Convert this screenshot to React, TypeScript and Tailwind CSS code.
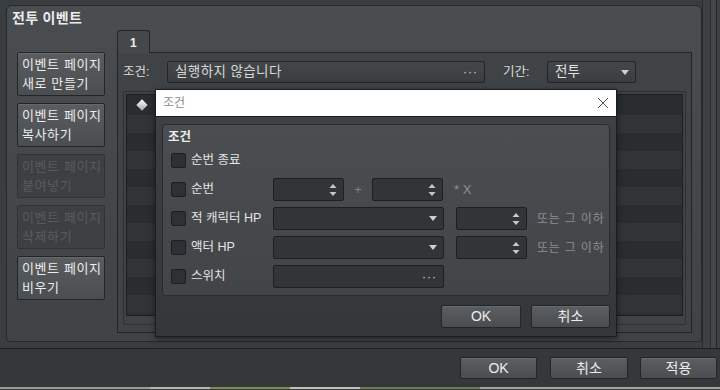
import React from 'react';

const Caret = () => (
  <svg width="8" height="5" viewBox="0 0 8 5">
    <path d="M0 0h8L4 5z" fill="#d0d0d0" />
  </svg>
);

const Spin = () => (
  <svg width="8" height="14" viewBox="0 0 8 14">
    <path d="M4 1L7.5 5H0.5z" fill="#c8c8c8" />
    <path d="M0.5 9H7.5L4 13z" fill="#c8c8c8" />
  </svg>
);

const Dots = () => <span className="text-[12px] leading-none tracking-[1px] text-[#d0d0d0]">···</span>;

// big grey button used in the left column and footers
const Btn = ({ children, className = '' }: { children: React.ReactNode; className?: string }) => (
  <div
    className={`flex items-center justify-center rounded-[2px] border border-[#232527] bg-gradient-to-b from-[#5c5f62] to-[#4a4d50] text-[14px] text-[#ececec] shadow-[inset_0_1px_0_rgba(255,255,255,0.08)] ${className}`}
  >
    {children}
  </div>
);

const PageBtn = ({ lines, disabled }: { lines: string[]; disabled?: boolean }) => (
  <div
    className={`flex h-[44px] w-[88px] flex-col justify-center rounded-[2px] border pl-[4px] text-[13px] leading-[19px] tracking-[0.6px] ${
      disabled
        ? 'border-[#303234] bg-[#3d4043] text-[#585b5e]'
        : 'border-[#232527] bg-gradient-to-b from-[#5a5d60] to-[#4b4e51] text-[#ececec] shadow-[inset_0_1px_0_rgba(255,255,255,0.08)]'
    }`}
  >
    {lines.map(l => (
      <span key={l}>{l}</span>
    ))}
  </div>
);

const Check = () => <div className="h-[15px] w-[15px] shrink-0 rounded-[2px] border border-[#1c1e20] bg-[#2e3134]" />;

const Field = ({ w, children }: { w: string; children?: React.ReactNode }) => (
  <div className={`flex h-[23px] items-center justify-end rounded-[2px] border border-[#1d1f21] bg-[#323538] pr-[6px] ${w}`}>
    {children}
  </div>
);

const Row = ({ label, children }: { label: string; children?: React.ReactNode }) => (
  <div className="flex h-[29px] items-center pl-[8px]">
    <div className="flex w-[102px] items-center gap-[5px]">
      <Check />
      <span className="text-[12.5px] text-[#e4e4e4]">{label}</span>
    </div>
    {children}
  </div>
);

const stripes = Array.from({ length: 12 }, (_, i) => i);

export default function App() {
  return (
    <div className="relative flex h-[390px] w-[720px] flex-col overflow-hidden bg-[#3a3d40] font-['Liberation_Sans','Noto_Sans_CJK_KR',sans-serif] text-[#e6e6e6]">
      {/* top area */}
      <div className="flex h-[349px] border-b border-[#1f2123]">
        <div className="w-[702px] pl-[6px] pt-[5px]">
          <div className="flex h-[337px] w-[696px] flex-col rounded-t-[6px] rounded-b-[4px] border border-[#26282a] bg-gradient-to-b from-[#4a4d50] to-[#404346]">
            <div className="h-[24px] pl-[5px] pt-[3px] text-[14px] font-bold leading-[18px] tracking-[0.3px] text-[#ececec]">전투 이벤트</div>
            <div className="flex flex-1">
              {/* left buttons */}
              <div className="flex w-[110px] flex-col gap-[7px] pl-[10px] pt-[22px]">
                <PageBtn lines={['이벤트 페이지', '새로 만들기']} />
                <PageBtn lines={['이벤트 페이지', '복사하기']} />
                <PageBtn lines={['이벤트 페이지', '붙여넣기']} disabled />
                <PageBtn lines={['이벤트 페이지', '삭제하기']} disabled />
                <PageBtn lines={['이벤트 페이지', '비우기']} />
              </div>
              {/* tab + content */}
              <div className="flex flex-col">
                <div className="relative z-10 -mb-px flex h-[23px] w-[33px] items-start rounded-t-[3px] border border-b-0 border-[#222426] bg-[#45484b] pl-[12px] pt-[3px] text-[12px] font-bold text-[#ececec]">
                  1
                </div>
                <div className="h-[281px] w-[575px] border border-[#222426] bg-[#404346] px-[5px] pt-[8px]">
                  <div className="flex h-[22px] items-center">
                    <span className="w-[44px] text-[12.5px] text-[#dcdcdc]">조건:</span>
                    <div className="flex h-[22px] w-[318px] items-center justify-between rounded-[2px] border border-[#222426] bg-gradient-to-b from-[#44474a] to-[#3b3e41] pl-[7px] pr-[6px]">
                      <span className="text-[13.5px] tracking-[0.4px] text-[#d8d8d8]">실행하지 않습니다</span>
                      <Dots />
                    </div>
                    <span className="ml-[18px] w-[44px] text-[12.5px] text-[#dcdcdc]">기간:</span>
                    <div className="flex h-[22px] w-[89px] items-center justify-between rounded-[2px] border border-[#222426] bg-gradient-to-b from-[#44474a] to-[#3b3e41] pl-[7px] pr-[6px]">
                      <span className="text-[13.5px] text-[#e0e0e0]">전투</span>
                      <Caret />
                    </div>
                  </div>
                  <div className="mt-[8px] h-[234px] w-[563px] rounded-[2px] border border-[#2e3133] p-[2px]">
                    <div className="h-[222px] w-[557px] overflow-hidden border border-[#1c1e20] bg-[#2c2f31]">
                      {stripes.map(i => (
                        <div key={i} className={`flex h-[18px] items-center ${i % 2 === 0 ? 'bg-[#2a2d2f]' : 'bg-[#313436]'} ${i === 0 ? 'h-[20px]' : ''}`}>
                          {i === 0 && (
                            <div className="ml-[11px] h-[8px] w-[8px] rotate-45 bg-gradient-to-br from-white to-[#a8a8a8]" />
                          )}
                        </div>
                      ))}
                    </div>
                  </div>
                </div>
              </div>
            </div>
          </div>
        </div>
        {/* right edge strip */}
        <div className="flex flex-1 border-l border-[#27292b] bg-[#3e4144]">
          <div className="w-[7px]" />
          <div className="w-px bg-[#2a2c2e]" />
          <div className="w-[5px] bg-[#44474a]" />
          <div className="w-px bg-[#242628]" />
        </div>
      </div>

      {/* footer */}
      <div className="flex h-[38px] items-center justify-end bg-[#35383b] pr-[3px]">
        <Btn className="h-[22px] w-[77px]">OK</Btn>
        <Btn className="ml-[13px] h-[22px] w-[78px]">취소</Btn>
        <Btn className="ml-[12px] h-[22px] w-[77px]">적용</Btn>
      </div>
      <div className="flex h-[2px]">
        <div className="w-[150px] bg-[#9a9a96]" />
        <div className="w-[60px] bg-[#b6b6b0]" />
        <div className="w-[80px] bg-[#7a8a50]" />
        <div className="w-[70px] bg-[#c0c0ba]" />
        <div className="w-[120px] bg-[#6d7a4c]" />
        <div className="flex-1 bg-[#a4a49e]" />
      </div>

      {/* condition dialog */}
      <div className="absolute left-[155px] top-[89px] flex h-[248px] w-[462px] flex-col border border-[#1a1c1e] bg-gradient-to-b from-[#3f4245] to-[#34373a] shadow-[0_2px_6px_rgba(0,0,0,0.5)]">
        <div className="flex h-[27px] items-center justify-between border-b border-[#1a1c1e] bg-white pl-[7px] pr-[7px]">
          <span className="text-[12px] text-[#8a8a8a]">조건</span>
          <svg width="12" height="12" viewBox="0 0 12 12">
            <path d="M1 1L11 11M11 1L1 11" stroke="#555" strokeWidth="1" />
          </svg>
        </div>
        <div className="mx-[6px] mt-[7px] h-[172px] rounded-[4px] border border-[#292b2d] bg-gradient-to-b from-[#4b4e51] to-[#424548] pt-[4px]">
          <div className="h-[17px] pl-[5px] text-[12.5px] font-bold leading-[17px] text-[#ececec]">조건</div>
          <Row label="순번 종료" />
          <Row label="순번">
            <Field w="w-[71px]">
              <Spin />
            </Field>
            <span className="w-[28px] text-center text-[13px] text-[#7e8184]">+</span>
            <Field w="w-[71px]">
              <Spin />
            </Field>
            <span className="ml-[11px] text-[13px] text-[#8c8f92]">* X</span>
          </Row>
          <Row label="적 캐릭터 HP">
            <Field w="w-[171px]">
              <Caret />
            </Field>
            <div className="ml-[12px]">
              <Field w="w-[71px]">
                <Spin />
              </Field>
            </div>
            <span className="ml-[10px] text-[12px] tracking-[0.8px] text-[#8c8f92]">또는 그 이하</span>
          </Row>
          <Row label="액터 HP">
            <Field w="w-[171px]">
              <Caret />
            </Field>
            <div className="ml-[12px]">
              <Field w="w-[71px]">
                <Spin />
              </Field>
            </div>
            <span className="ml-[10px] text-[12px] tracking-[0.8px] text-[#8c8f92]">또는 그 이하</span>
          </Row>
          <Row label="스위치">
            <Field w="w-[171px]">
              <Dots />
            </Field>
          </Row>
        </div>
        <div className="mt-[9px] flex justify-end gap-[10px] pr-[6px]">
          <Btn className="h-[23px] w-[80px]">OK</Btn>
          <Btn className="h-[23px] w-[79px]">취소</Btn>
        </div>
      </div>
    </div>
  );
}
